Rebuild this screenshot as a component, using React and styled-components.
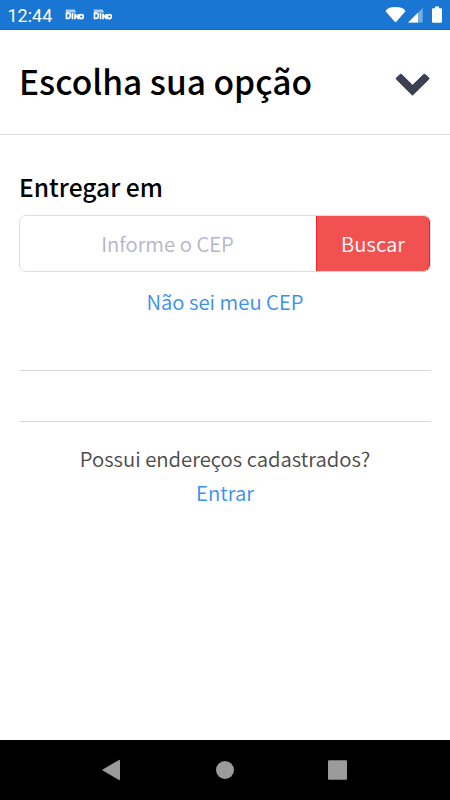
import React from 'react';
import styled, { createGlobalStyle } from 'styled-components';

const GlobalStyle = createGlobalStyle`
  * { box-sizing: border-box; }
  body { margin: 0; background: #fff; }
`;

const Screen = styled.div`
  display: flex;
  flex-direction: column;
  width: 450px;
  height: 800px;
  overflow: hidden;
  background: #fff;
  font-family: "Noto Sans CJK JP", "Open Sans", sans-serif;
`;

const StatusBar = styled.header`
  display: flex;
  align-items: center;
  flex: none;
  height: 30px;
  padding: 0 6px 0 7.5px;
  background: #1976d2;
  border-bottom: 1px solid #1565c4;
  color: #fff;
`;

const Clock = styled.span`
  width: 57.5px;
  font: 400 18px/30px Roboto, sans-serif;
  padding-top: 2px;
`;

const Badge = styled.svg`
  display: block;
  width: 20px;
  height: 12px;
  margin-right: 8px;
`;

const SystemIcons = styled.svg`
  display: block;
  width: 60px;
  height: 20px;
  margin-left: auto;
`;

const TitleBar = styled.div`
  display: flex;
  align-items: center;
  justify-content: space-between;
  flex: none;
  height: 105px;
  padding: 0 20px 0 19px;
  border-bottom: 1px solid #dcdcdc;
`;

const Title = styled.h1`
  margin: 0 0 3px;
  font-size: 33.5px;
  font-weight: 500;
  line-height: 50px;
  white-space: nowrap;
  color: #000;
`;

const Chevron = styled.svg`
  display: block;
  width: 36px;
  height: 24px;
  margin: 3px -1px 0 0;
`;

const Content = styled.main`
  display: flex;
  flex-direction: column;
  flex: 1;
  padding: 31px 19px 0;
`;

const SectionTitle = styled.h2`
  margin: 0 0 9px;
  font-size: 24.6px;
  font-weight: 500;
  line-height: 40px;
  color: #000;
`;

const SearchField = styled.div`
  display: flex;
  height: 57px;
  border: 1px solid #d5e0e4;
  border-radius: 7px;
  overflow: hidden;
`;

const CepInput = styled.input`
  flex: 1;
  min-width: 0;
  padding: 0 1px 1px 0;
  border: 0;
  outline: 0;
  background: #fff;
  font: 350 20.3px/30px "Noto Sans CJK JP", sans-serif;
  text-align: center;
  &::placeholder { color: #b4b6c8; opacity: 1; }
`;

const SearchButton = styled.button`
  width: 114px;
  padding: 0 0 2px;
  border: 0;
  border-left: 1px solid #f02626;
  border-right: 1px solid #ee2020;
  border-radius: 0 6px 6px 0;
  background: #f15151;
  color: #fff;
  font: 350 20.3px/30px "Noto Sans CJK JP", sans-serif;
`;

const Line = styled.p`
  margin: ${(p) => p.$top || 0}px 0 0;
  font-size: 20.3px;
  font-weight: 350;
  line-height: 34px;
  text-align: center;
  color: #4a4a4a;
`;

const Link = styled.a`
  color: #3a90ec;
`;

const Rule = styled.hr`
  width: 100%;
  height: 1px;
  margin: ${(p) => p.$top}px 0 0;
  border: 0;
  background: #d9d9d9;
`;

const NavBar = styled.nav`
  display: flex;
  justify-content: space-between;
  align-items: center;
  flex: none;
  height: 60px;
  padding: 0 100px 0 101px;
  background: #000;
`;

const NavIcon = styled.svg`
  display: block;
  width: 22px;
  height: 22px;
  fill: #9b9b9b;
`;

const DinoBadge = () => (
  <Badge viewBox="0 0 20 12">
    <g fill="none" stroke="#fff" strokeWidth="1.7" strokeLinejoin="round">
      <path d="M1.500 4.200v5.300h1.400q2.500-.2 2.500-2.650t-2.500-2.650z" />
      <path d="M7.500 4v6.200M10 10.200V5.400l3.300 4.100V4.900" />
      <circle cx="16.300" cy="7.600" r="2" />
    </g>
    <path d="M.8 1.300h9.200M.8 2.800h10" stroke="#fff" strokeWidth="1.500" opacity=".65" />
  </Badge>
);

export default function App() {
  return (
    <Screen>
      <GlobalStyle />
      <StatusBar>
        <Clock>12:44</Clock>
        <DinoBadge />
        <DinoBadge />
        <SystemIcons viewBox="384 5 60 20">
          <path d="M385.500 11.200Q387.500 7 395.500 7T405.500 11.200L396.500 21.500Q395.500 22.500 394.500 21.500Z" fill="#fff" />
          <path d="M422.700 8v14.600h-14.600z" fill="#75ade4" />
          <path d="M418 12.700v9.900h-9.900z" fill="#fff" />
          <path d="M435 6.400h4v1.800h2q1 0 1 1v12.600q0 1-1 1h-8q-1 0-1-1V9.200q0-1 1-1h2z" fill="#fff" />
        </SystemIcons>
      </StatusBar>
      <TitleBar>
        <Title>Escolha sua opção</Title>
        <Chevron viewBox="395 72 36 24">
          <path d="M400.500 74.200Q401.200 73.900 402 74.800L412.500 85.300L423.600 74.600Q424.500 73.900 425.300 74.600L428.700 77.800Q429.400 78.500 428.700 79.200L412.500 95.200L396.400 79.200Q395.800 78.500 396.500 77.800Z" fill="#3c4053" stroke="#25284a" strokeWidth=".8" />
        </Chevron>
      </TitleBar>
      <Content>
        <SectionTitle>Entregar em</SectionTitle>
        <SearchField>
          <CepInput placeholder="Informe o CEP" />
          <SearchButton>Buscar</SearchButton>
        </SearchField>
        <Line $top={12}><Link>Não sei meu CEP</Link></Line>
        <Rule $top={52} />
        <Rule $top={50} />
        <Line $top={19}>Possui endereços cadastrados?</Line>
        <Line><Link>Entrar</Link></Line>
      </Content>
      <NavBar>
        <NavIcon viewBox="0 0 22 22"><path d="M18 .9Q19 .5 19 1.600v18.800q0 1-1 .5L1.700 11.500q-.7-.5 0-1z" /></NavIcon>
        <NavIcon viewBox="0 0 22 22"><circle cx="10" cy="11" r="9" /></NavIcon>
        <NavIcon viewBox="0 0 22 22"><rect x="0" y="1.300" width="19" height="19.400" rx="1" /></NavIcon>
      </NavBar>
    </Screen>
  );
}
